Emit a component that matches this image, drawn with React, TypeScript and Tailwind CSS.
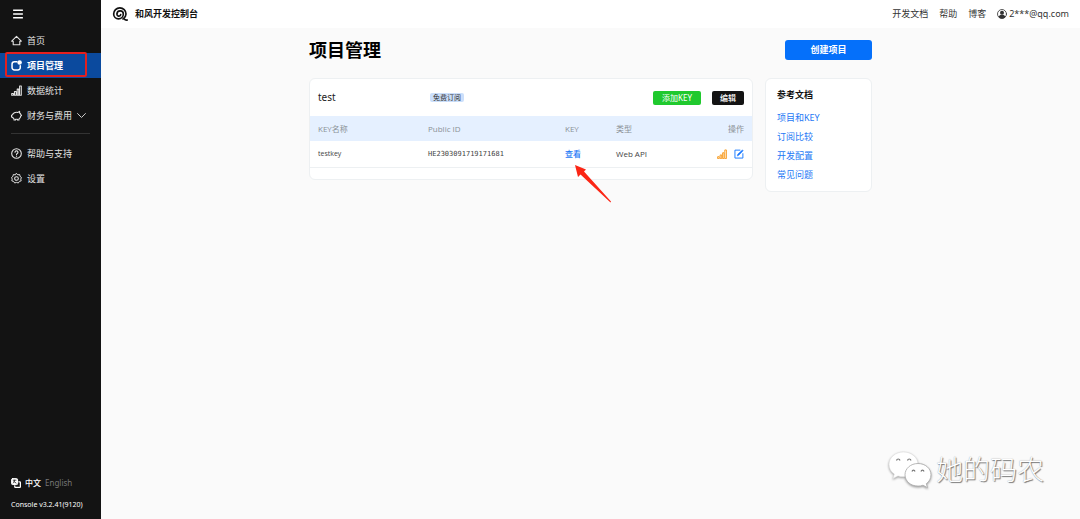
import type { ReactNode } from 'react'
import clsx from 'clsx'

function Icon({ children, className = 'size-[11px]' }: { children: ReactNode; className?: string }) {
  return (
    <svg
      viewBox="0 0 16 16"
      className={clsx('shrink-0', className)}
      fill="none"
      stroke="currentColor"
      strokeWidth="1.6"
      strokeLinecap="round"
      strokeLinejoin="round"
      aria-hidden
    >
      {children}
    </svg>
  )
}

const HomeIcon = () => (
  <Icon>
    <path d="M1 9 8 2l7 7h-2.200v5.200H3.200V9z" />
  </Icon>
)

const ProjectIcon = () => (
  <Icon>
    <path d="M8.500 2.500H5A3.500 3.500 0 0 0 1.500 6v5A3.500 3.500 0 0 0 5 14.500h5a3.500 3.500 0 0 0 3.500-3.500V8.500" strokeWidth="2.200" />
    <circle cx="12.500" cy="3.500" r="3.300" fill="currentColor" stroke="none" />
  </Icon>
)

const BarsIcon = ({ className }: { className?: string }) => (
  <Icon className={className}>
    <path d="M1 14.800v-2.500h2.500v2.500zM5 14.800V9.500h2.500v5.300zM9 14.800V6h2.200v8.800zM12.500 14.800V1.500H15v13.300z" strokeWidth="1.500" />
  </Icon>
)

const PiggyIcon = () => (
  <Icon>
    <path d="M5 4C3.500 4.700 2.500 5.800 2.200 7L.8 7.500v2.700l1.600.5c.5 1 1.200 1.700 2 2.200v1.600h2.200v-1h2.800v1h2.200v-1.600c1.600-1 2.400-2.500 2.600-4.200l1.100-.8-1-1.400c-.4-1-1-1.700-1.800-2.200V2L9.800 3.600C8 3.200 6.500 3.300 5 4z" />
  </Icon>
)

const HelpIcon = () => (
  <Icon>
    <circle cx="8" cy="8" r="7" />
    <path d="M5.900 6.200a2.100 2.100 0 1 1 3.200 1.800c-.8.500-1.100.8-1.100 1.500M8 11.700v.2" strokeWidth="1.700" />
  </Icon>
)

const GearIcon = () => (
  <Icon>
    <path
      d="M8 .8 10 2.600l2.700-.3.400 2.600L15.200 6.500 14.200 8.900l.6 2.600-2.600.7L10.700 14.500 8 13.700l-2.700.8-1.500-2.300-2.600-.7.600-2.600-1-2.400 2.100-1.600.4-2.600 2.700.3z"
      strokeWidth="1.400"
    />
    <circle cx="8" cy="8" r="2.700" strokeWidth="1.500" />
  </Icon>
)

const LanguageIcon = () => (
  <Icon className="size-[10px]">
    <rect x="1" y="1" width="9.500" height="9.500" rx="1.500" fill="currentColor" />
    <path d="M12.500 6H14a1 1 0 0 1 1 1v7a1 1 0 0 1-1 1H7a1 1 0 0 1-1-1v-1.500" strokeWidth="2" />
    <path d="M3.500 3.500H8M5.700 3.500c0 2-.8 3.400-2.200 4.500M4.500 5.500 8 8" stroke="#131313" strokeWidth="1.200" />
  </Icon>
)

const UserIcon = () => (
  <Icon className="size-[10px]">
    <circle cx="8" cy="8" r="7.200" strokeWidth="1.300" />
    <circle cx="8" cy="6" r="3.200" fill="currentColor" stroke="none" />
    <path d="M2.500 12.800C3.200 10.300 5.500 9.300 8 9.300s4.800 1 5.500 3.500C12 14.500 10 15.200 8 15.200s-4-.7-5.500-2.400z" fill="currentColor" stroke="none" />
  </Icon>
)

const EditIcon = () => (
  <Icon className="size-[10px]">
    <path d="M9.500 1.800H1.500v12.700h12.700V7.500" strokeWidth="1.500" />
    <path d="M5.500 10.500 6 8.500l7.500-7 1 1.200-7 7.300z" fill="currentColor" strokeWidth="1" />
  </Icon>
)

const Logo = () => (
  <svg viewBox="0 0 48 48" className="size-4" fill="none" stroke="#111" strokeLinecap="round" aria-hidden>
    <path
      d="M26 26A5.500 5.500 0 0 1 15 24A9.500 9.500 0 0 1 34 24A14.500 14.500 0 0 1 5 24A18.500 18.500 0 0 1 42 24C42 32 36 36 33 39M36 38C39 42 42 43 46 42"
      strokeWidth="5"
    />
  </svg>
)

const navItems = [
  { label: '首页', icon: <HomeIcon /> },
  { label: '项目管理', icon: <ProjectIcon />, active: true },
  { label: '数据统计', icon: <BarsIcon /> },
  { label: '财务与费用', icon: <PiggyIcon />, expandable: true },
]

const supportItems = [
  { label: '帮助与支持', icon: <HelpIcon /> },
  { label: '设置', icon: <GearIcon /> },
]

const docs = ['项目和KEY', '订阅比较', '开发配置', '常见问题']

type NavItemProps = { label: string; icon: ReactNode; active?: boolean; expandable?: boolean }

function NavItem({ label, icon, active, expandable }: NavItemProps) {
  return (
    <a
      href="#"
      className={clsx(
        'relative flex h-[25px] items-center gap-[5px] pl-[11px] text-[9px]',
        active ? 'bg-[#0b4a9e] font-bold text-white' : 'text-[#e4e4e4]',
      )}
    >
      {icon}
      <span>{label}</span>
      {expandable ? (
        <Icon className="size-[9px]">
          <path d="m1 4.500 7 7 7-7" />
        </Icon>
      ) : null}
      {active ? (
        <span className="pointer-events-none absolute -top-px left-[5px] h-[25px] w-[82px] rounded-xs border-2 border-[#e3201f]" />
      ) : null}
    </a>
  )
}

function Sidebar() {
  return (
    <aside className="flex w-[101px] shrink-0 flex-col bg-[#131313]">
      <button type="button" aria-label="菜单" className="flex h-7 items-center pl-3 text-white">
        <Icon className="size-3">
          <path d="M1.500 3h13M1.500 8h13M1.500 13h13" strokeWidth="2.200" strokeLinecap="butt" />
        </Icon>
      </button>
      <nav>
        {navItems.map((item) => (
          <NavItem key={item.label} {...item} />
        ))}
        <hr className="mx-[11px] mt-[5px] mb-[7px] border-[#333]" />
        {supportItems.map((item) => (
          <NavItem key={item.label} {...item} />
        ))}
      </nav>
      <div className="mt-auto pb-2 pl-[11px] text-white">
        <div className="flex items-center gap-1 text-[8px]">
          <LanguageIcon />
          <button type="button" className="font-medium">中文</button>
          <button type="button" className="text-[#777]">English</button>
        </div>
        <p className="mt-[10px] text-[7px] leading-3">Console v3.2.41(9120)</p>
      </div>
    </aside>
  )
}

function Header() {
  return (
    <header className="flex h-7 items-center justify-between bg-white px-[11px]">
      <a href="#" className="flex items-center gap-[7px] text-[9px] font-bold text-[#111]">
        <Logo />
        和风开发控制台
      </a>
      <nav className="flex items-center gap-[11px] text-[9px] text-[#333]">
        <a href="#">开发文档</a>
        <a href="#">帮助</a>
        <a href="#">博客</a>
        <a href="#" className="flex items-center gap-[2px]">
          <UserIcon />
          2***@qq.com
        </a>
      </nav>
    </header>
  )
}

function ProjectCard() {
  return (
    <section className="relative min-w-0 flex-1 rounded-md border border-[#edf0f2] bg-white pb-[11px]">
      <div className="flex h-[37px] items-center pr-2 pl-2">
        <h2 className="w-[112px] text-[10px] text-[#222]">test</h2>
        <span className="rounded-xs bg-[#cbdffb] px-[3px] text-[7px] leading-[9px] text-[#333]">免费订阅</span>
        <div className="ml-auto flex gap-[11px] text-[8px] leading-[14px] text-white">
          <button type="button" className="rounded-xs bg-[#20c92e] px-[9px]">添加KEY</button>
          <button type="button" className="rounded-xs bg-[#131313] px-2 font-medium">编辑</button>
        </div>
      </div>
      <table className="w-full table-fixed text-left font-['Open_Sans','Noto_Sans_CJK_SC',sans-serif] text-[8px] text-[#444]">
        <thead className="bg-[#e5f0ff] text-[#8b9096]">
          <tr className="h-[25px]">
            <th className="w-[118px] pl-2 font-normal">KEY名称</th>
            <th className="w-[31%] font-normal">Public ID</th>
            <th className="w-[51px] font-normal">KEY</th>
            <th className="font-normal">类型</th>
            <th className="pr-2 text-right font-normal">操作</th>
          </tr>
        </thead>
        <tbody>
          <tr className="h-[26px] border-b border-[#edf0f2]">
            <td className="pl-2 text-[7px]">testkey</td>
            <td className="font-['DejaVu_Sans_Mono','Liberation_Mono',monospace] text-[7px]">HE2303091719171681</td>
            <td>
              <a href="#" className="font-medium text-[#2478f5]">查看</a>
            </td>
            <td>Web API</td>
            <td className="pr-2">
              <div className="flex justify-end gap-[7px]">
                <button type="button" aria-label="统计" className="text-[#f79a1f]">
                  <BarsIcon className="size-[10px]" />
                </button>
                <button type="button" aria-label="编辑" className="text-[#1677ff]">
                  <EditIcon />
                </button>
              </div>
            </td>
          </tr>
        </tbody>
      </table>
      <svg viewBox="0 0 36 38" className="absolute top-[86px] left-[265px] h-[38px] w-9" aria-hidden>
        <path d="M0 0 11 4.500 9 6.500 36 36.500 35.500 37.500 5.500 9.500 3 12z" fill="#fb2615" />
      </svg>
    </section>
  )
}

function DocsCard() {
  return (
    <aside className="w-[107px] shrink-0 rounded-md border border-[#edf0f2] bg-white px-[11px] py-[7px] text-[9px]">
      <h2 className="leading-[18px] font-bold text-[#111]">参考文档</h2>
      <ul className="mt-1 leading-[19px] text-[#2478f5]">
        {docs.map((doc) => (
          <li key={doc}>
            <a href="#">{doc}</a>
          </li>
        ))}
      </ul>
    </aside>
  )
}

function Watermark() {
  return (
    <div className="absolute right-9 bottom-[30px] flex items-center gap-1">
      <svg viewBox="0 0 44 38" className="h-[38px] w-11 drop-shadow-[0_1px_1px_#999]" fill="#fff" stroke="#ddd" strokeWidth="0.500" aria-hidden>
        <path d="M15.500 1C7.500 1 1 6.500 1 13.500c0 4 2 7.300 5.300 9.600L5 27.500l5-2.600c1.800.6 3.600.8 5.500.8 8 0 14.500-5.500 14.500-12.300S23.500 1 15.500 1z" />
        <path d="M30 12.500c-7.300 0-13 5-13 11.300s5.700 11.300 13 11.300c1.800 0 3.400-.3 5-.9l4.500 2.500-1.200-4c2.900-2 4.700-5.300 4.700-8.900 0-6.300-5.700-11.300-13-11.300z" stroke="#b0b0b0" strokeWidth="0.900" />
        <path d="M8.500 9.500c.5-2 3-2 3.500 0M19.500 9.500c.5-2 3-2 3.500 0M24 20.500c.5-1.800 2.500-1.800 3 0M33 20.500c.5-1.800 2.500-1.800 3 0" fill="none" stroke="#777" strokeWidth="1.200" />
      </svg>
      <span className="text-[27px] leading-9 font-light text-white [text-shadow:1px_1px_1px_#777,0_0_1px_#999]">
        她的码农
      </span>
    </div>
  )
}

export default function App() {
  return (
    <div className="relative flex min-h-screen bg-[#fafafa] font-['Noto_Sans','Noto_Sans_CJK_SC',sans-serif]">
      <Sidebar />
      <div className="min-w-0 flex-1">
        <Header />
        <main className="mx-auto max-w-[563px] pt-3">
          <div className="flex items-center justify-between">
            <h1 className="text-lg leading-5 font-bold text-black">项目管理</h1>
            <button type="button" className="h-5 w-[87px] rounded-[3px] bg-[#0570fa] text-[9px] font-bold text-white">
              创建项目
            </button>
          </div>
          <div className="mt-[18px] flex items-start gap-3">
            <ProjectCard />
            <DocsCard />
          </div>
        </main>
      </div>
      <Watermark />
    </div>
  )
}
